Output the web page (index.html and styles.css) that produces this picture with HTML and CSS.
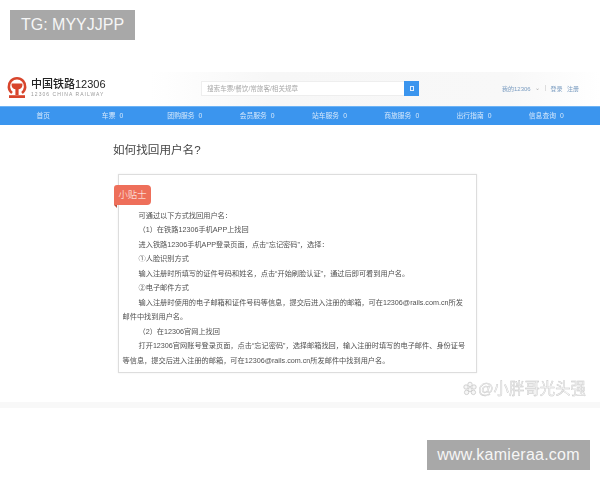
FILE: index.html
```html
<!DOCTYPE html>
<html>
<head>
    <title>如何找回用户名</title>
    <meta charset="UTF-8">
    <link rel="stylesheet" href="styles.css">
</head>
<body>
    <div class="page">
        <div class="header">
            <div class="logo">
                <svg class="logo-mark" width="25" height="24" viewBox="0 0 25 24">
                    <path d="M6 18a8.2 8.2 0 1 1 10 0" fill="none" stroke="#d8452c" stroke-width="2.6"/>
                    <path d="M5.6 8.4h10.8v1.8c0 2.6-2.4 3.8-3.8 4v5.8h-3.2v-5.8c-1.4-.2-3.8-1.4-3.8-4z" fill="#d8452c"/>
                    <path d="M3 20.2h16v2.8H3z" fill="#d8452c"/>
                </svg>
                <div class="logo-text">
                    <div class="logo-name">中国铁路12306</div>
                    <div class="logo-sub">12306 CHINA RAILWAY</div>
                </div>
            </div>
            <div class="search">
                <div class="search-input">搜索车票/餐饮/常旅客/相关规章</div>
                <div class="search-btn"><span class="search-glyph"></span></div>
            </div>
            <div class="user-links">
                <span>我的12306</span>
                <span class="caret">⌄</span>
                <span class="sep"></span>
                <span>登录</span>
                <span>注册</span>
            </div>
        </div>

        <div class="nav">
            <div class="nav-item">首页</div>
            <div class="nav-item">车票<i>0</i></div>
            <div class="nav-item">团购服务<i>0</i></div>
            <div class="nav-item">会员服务<i>0</i></div>
            <div class="nav-item">站车服务<i>0</i></div>
            <div class="nav-item">商旅服务<i>0</i></div>
            <div class="nav-item">出行指南<i>0</i></div>
            <div class="nav-item">信息查询<i>0</i></div>
        </div>

        <div class="content">
            <h1>如何找回用户名?</h1>
            <div class="card">
                <div class="tip">小贴士</div>
                <p>可通过以下方式找回用户名：</p>
                <p>（1）在铁路12306手机APP上找回</p>
                <p>进入铁路12306手机APP登录页面，点击“忘记密码”，选择：</p>
                <p>①人脸识别方式</p>
                <p>输入注册时所填写的证件号码和姓名，点击“开始刷脸认证”，通过后即可看到用户名。</p>
                <p>②电子邮件方式</p>
                <p>输入注册时使用的电子邮箱和证件号码等信息，提交后进入注册的邮箱，可在12306@rails.com.cn所发邮件中找到用户名。</p>
                <p>（2）在12306官网上找回</p>
                <p>打开12306官网账号登录页面，点击“忘记密码”，选择邮箱找回，输入注册时填写的电子邮件、身份证号等信息，提交后进入注册的邮箱，可在12306@rails.com.cn所发邮件中找到用户名。</p>
            </div>
        </div>

        <div class="footer-strip"></div>
    </div>

    <div class="tag tag-top">TG: MYYJJPP</div>
    <div class="watermark">
        <svg width="16" height="16" viewBox="0 0 16 16">
            <g fill="#f6f6f6" stroke="#c8c8c8" stroke-width="0.8">
                <circle cx="4" cy="6" r="2.2"/>
                <circle cx="12" cy="6" r="2.2"/>
                <circle cx="8" cy="3.4" r="2.2"/>
                <circle cx="4.6" cy="11.4" r="2.2"/>
                <circle cx="11.4" cy="11.4" r="2.2"/>
                <circle cx="8" cy="8.6" r="2"/>
            </g>
        </svg>
        <span>@小胖哥光头强</span>
    </div>
    <div class="tag tag-bottom">www.kamieraa.com</div>
</body>
</html>
```

FILE: styles.css
```css
:root {
    --blue: #3b95ee;
    --text: #505050;
    --tag-bg: #a8a8a8;
}

* {
    margin: 0;
    padding: 0;
    box-sizing: border-box;
}

body {
    width: 600px;
    height: 480px;
    overflow: hidden;
    background: #fff;
    color: var(--text);
    font-family: "Liberation Sans", "Noto Sans CJK SC", sans-serif;
    position: relative;
}

.page {
    padding-top: 72px;
    filter: blur(0.45px);
}

.header {
    height: 34px;
    display: flex;
    align-items: center;
    padding: 0 0 0 6px;
    background: linear-gradient(90deg, #fff 25%, #f7f7f7 45%, #f8f8f8 85%, #fff 100%);
}

.logo {
    width: 195px;
    display: flex;
    align-items: center;
    margin-top: -4px;
}

.logo-name {
    font-size: 11px;
    font-weight: 500;
    line-height: 14px;
    color: #222;
}

.logo-sub {
    font-size: 5px;
    line-height: 7px;
    letter-spacing: 1.05px;
    color: #999;
    white-space: nowrap;
}

.search {
    width: 218px;
    height: 15px;
    display: flex;
    margin-top: -2px;
}

.search-input {
    flex: 1;
    background: #fff;
    border: 1px solid #eee;
    border-right: none;
    font-size: 6.6px;
    line-height: 13px;
    padding-left: 5px;
    color: #aaa;
}

.search-btn {
    width: 15px;
    background: var(--blue);
    display: flex;
    align-items: center;
    justify-content: center;
}

.search-glyph {
    width: 4px;
    height: 5px;
    border: 1px solid #dfeeff;
}

.user-links {
    margin-left: 83px;
    margin-top: -2px;
    display: flex;
    align-items: center;
    gap: 4.6px;
    font-size: 6px;
    color: #7a9cc0;
}

.caret {
    color: #aaa;
    margin-top: -2px;
}

.sep {
    width: 1px;
    height: 6px;
    background: #ddd;
}

.nav {
    height: 19px;
    background: var(--blue);
    border-top: 1px solid #6db3f5;
    display: grid;
    grid-template-columns: 66.4px repeat(7, 72.3px);
    padding-left: 10px;
}

.nav-item {
    font-size: 6.8px;
    line-height: 18px;
    color: #d5e8fb;
    text-align: center;
    white-space: nowrap;
}

.nav-item i {
    font-style: normal;
    margin-left: 4px;
}

.content {
    width: 364px;
    margin-left: 113px;
}

h1 {
    font-weight: normal;
    font-size: 11.6px;
    line-height: 20px;
    color: #444;
    padding-top: 15px;
}

.card {
    position: relative;
    width: 359px;
    height: 199px;
    margin: 14px 0 0 5px;
    border: 1px solid #ddd;
    padding: 33.5px 7px 0 3.5px;
    font-size: 7.2px;
    line-height: 14.55px;
    box-shadow: 0 0 2px #eee;
}

.card p {
    text-indent: 16px;
}

.tip {
    position: absolute;
    left: -5px;
    top: 10px;
    width: 37px;
    height: 20px;
    background: #ee6f5a;
    color: #fff;
    border-radius: 3px 4px 4px 0;
    font-size: 9.4px;
    font-weight: 300;
    line-height: 20px;
    text-align: center;
    text-indent: 0;
}

.tip::after {
    content: "";
    position: absolute;
    left: 0;
    top: 20px;
    border-top: 3px solid #b9523f;
    border-left: 3px solid transparent;
}

.footer-strip {
    height: 6px;
    margin-top: 29px;
    background: #f8f8f8;
}

.tag {
    position: absolute;
    height: 30px;
    background: var(--tag-bg);
    color: #f6f6f6;
    font-size: 16px;
    line-height: 30px;
    text-align: center;
}

.tag-top {
    left: 10px;
    top: 10px;
    width: 125px;
}

.tag-bottom {
    left: 427px;
    top: 440px;
    width: 163px;
    letter-spacing: 0.25px;
}

.watermark {
    position: absolute;
    left: 462px;
    top: 380px;
    display: flex;
    align-items: center;
    font-size: 15.4px;
    line-height: 18px;
    color: #f8f8f8;
    -webkit-text-stroke: 0.4px #c4c4c4;
    white-space: nowrap;
}
```
